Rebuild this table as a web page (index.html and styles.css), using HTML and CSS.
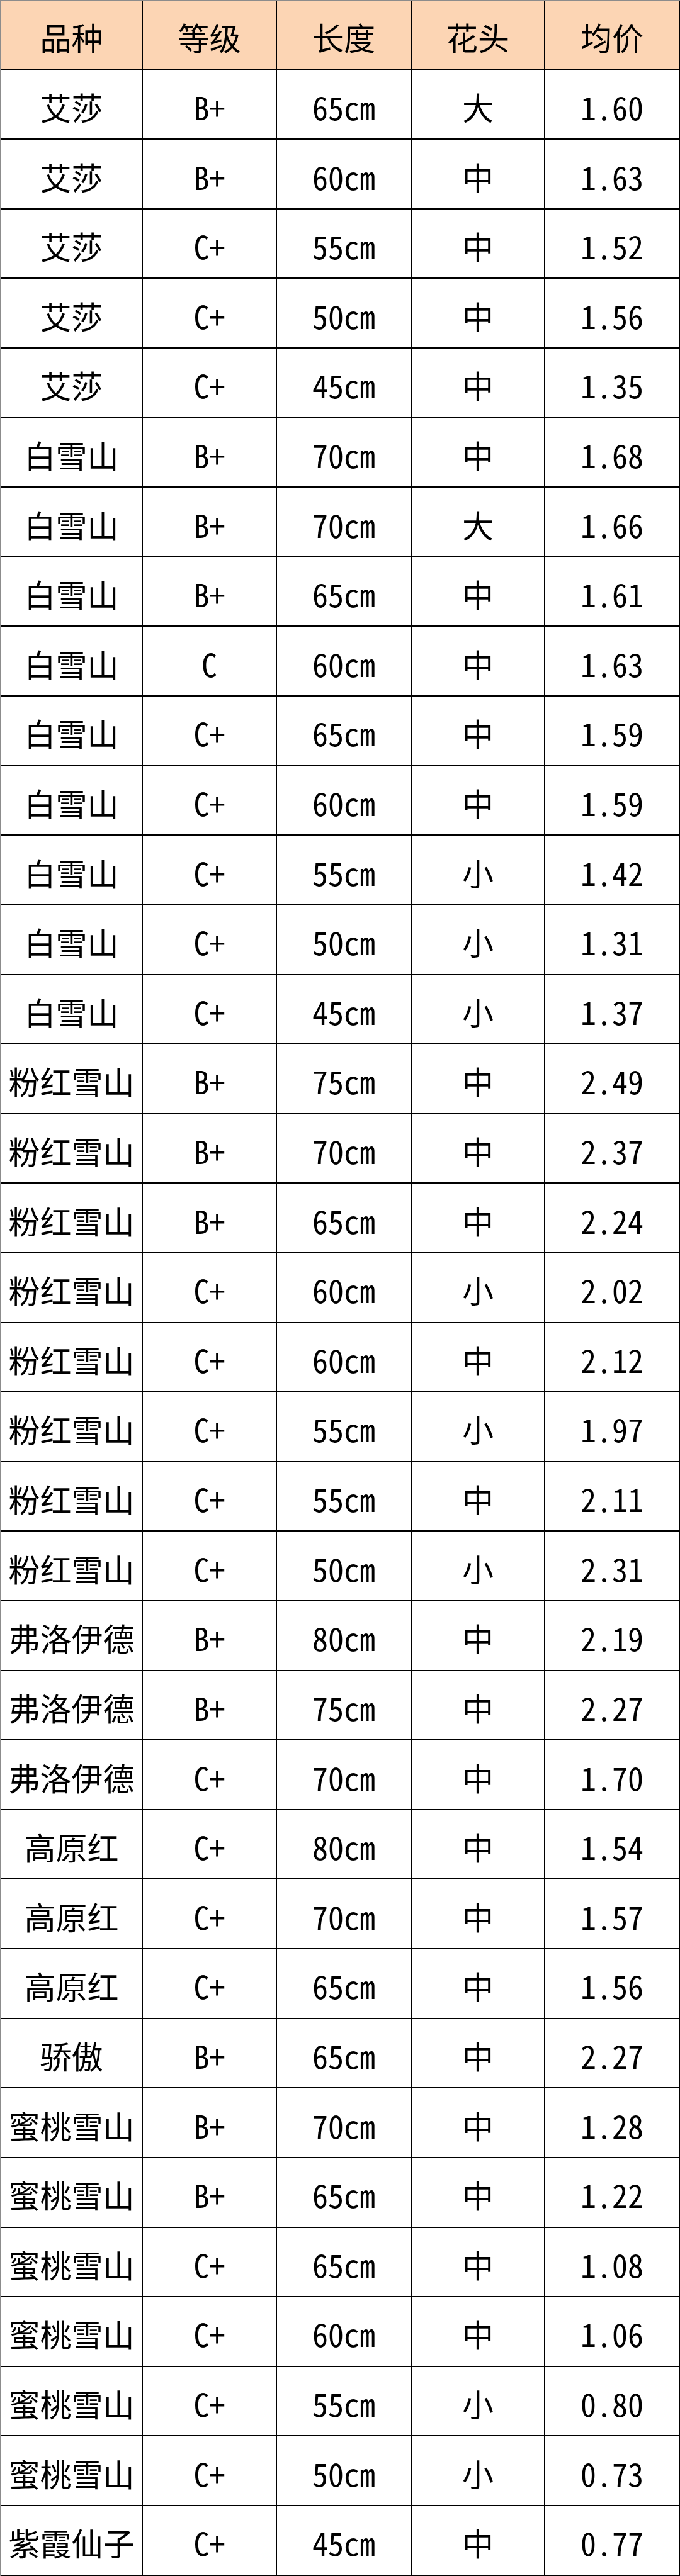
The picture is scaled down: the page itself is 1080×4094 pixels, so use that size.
FILE: index.html
```html
<!DOCTYPE html>
<html lang="zh-CN">
<head>
<meta charset="utf-8">
<title>价格表</title>
<link rel="stylesheet" href="styles.css">
</head>
<body>
<div class="sheet">
  <div class="cell head">品种</div><div class="cell head">等级</div><div class="cell head">长度</div><div class="cell head">花头</div><div class="cell head">均价</div>
  <div class="cell">艾莎</div><div class="cell">B+</div><div class="cell">65cm</div><div class="cell">大</div><div class="cell">1.60</div>
  <div class="cell">艾莎</div><div class="cell">B+</div><div class="cell">60cm</div><div class="cell">中</div><div class="cell">1.63</div>
  <div class="cell">艾莎</div><div class="cell">C+</div><div class="cell">55cm</div><div class="cell">中</div><div class="cell">1.52</div>
  <div class="cell">艾莎</div><div class="cell">C+</div><div class="cell">50cm</div><div class="cell">中</div><div class="cell">1.56</div>
  <div class="cell">艾莎</div><div class="cell">C+</div><div class="cell">45cm</div><div class="cell">中</div><div class="cell">1.35</div>
  <div class="cell">白雪山</div><div class="cell">B+</div><div class="cell">70cm</div><div class="cell">中</div><div class="cell">1.68</div>
  <div class="cell">白雪山</div><div class="cell">B+</div><div class="cell">70cm</div><div class="cell">大</div><div class="cell">1.66</div>
  <div class="cell">白雪山</div><div class="cell">B+</div><div class="cell">65cm</div><div class="cell">中</div><div class="cell">1.61</div>
  <div class="cell">白雪山</div><div class="cell">C</div><div class="cell">60cm</div><div class="cell">中</div><div class="cell">1.63</div>
  <div class="cell">白雪山</div><div class="cell">C+</div><div class="cell">65cm</div><div class="cell">中</div><div class="cell">1.59</div>
  <div class="cell">白雪山</div><div class="cell">C+</div><div class="cell">60cm</div><div class="cell">中</div><div class="cell">1.59</div>
  <div class="cell">白雪山</div><div class="cell">C+</div><div class="cell">55cm</div><div class="cell">小</div><div class="cell">1.42</div>
  <div class="cell">白雪山</div><div class="cell">C+</div><div class="cell">50cm</div><div class="cell">小</div><div class="cell">1.31</div>
  <div class="cell">白雪山</div><div class="cell">C+</div><div class="cell">45cm</div><div class="cell">小</div><div class="cell">1.37</div>
  <div class="cell">粉红雪山</div><div class="cell">B+</div><div class="cell">75cm</div><div class="cell">中</div><div class="cell">2.49</div>
  <div class="cell">粉红雪山</div><div class="cell">B+</div><div class="cell">70cm</div><div class="cell">中</div><div class="cell">2.37</div>
  <div class="cell">粉红雪山</div><div class="cell">B+</div><div class="cell">65cm</div><div class="cell">中</div><div class="cell">2.24</div>
  <div class="cell">粉红雪山</div><div class="cell">C+</div><div class="cell">60cm</div><div class="cell">小</div><div class="cell">2.02</div>
  <div class="cell">粉红雪山</div><div class="cell">C+</div><div class="cell">60cm</div><div class="cell">中</div><div class="cell">2.12</div>
  <div class="cell">粉红雪山</div><div class="cell">C+</div><div class="cell">55cm</div><div class="cell">小</div><div class="cell">1.97</div>
  <div class="cell">粉红雪山</div><div class="cell">C+</div><div class="cell">55cm</div><div class="cell">中</div><div class="cell">2.11</div>
  <div class="cell">粉红雪山</div><div class="cell">C+</div><div class="cell">50cm</div><div class="cell">小</div><div class="cell">2.31</div>
  <div class="cell">弗洛伊德</div><div class="cell">B+</div><div class="cell">80cm</div><div class="cell">中</div><div class="cell">2.19</div>
  <div class="cell">弗洛伊德</div><div class="cell">B+</div><div class="cell">75cm</div><div class="cell">中</div><div class="cell">2.27</div>
  <div class="cell">弗洛伊德</div><div class="cell">C+</div><div class="cell">70cm</div><div class="cell">中</div><div class="cell">1.70</div>
  <div class="cell">高原红</div><div class="cell">C+</div><div class="cell">80cm</div><div class="cell">中</div><div class="cell">1.54</div>
  <div class="cell">高原红</div><div class="cell">C+</div><div class="cell">70cm</div><div class="cell">中</div><div class="cell">1.57</div>
  <div class="cell">高原红</div><div class="cell">C+</div><div class="cell">65cm</div><div class="cell">中</div><div class="cell">1.56</div>
  <div class="cell">骄傲</div><div class="cell">B+</div><div class="cell">65cm</div><div class="cell">中</div><div class="cell">2.27</div>
  <div class="cell">蜜桃雪山</div><div class="cell">B+</div><div class="cell">70cm</div><div class="cell">中</div><div class="cell">1.28</div>
  <div class="cell">蜜桃雪山</div><div class="cell">B+</div><div class="cell">65cm</div><div class="cell">中</div><div class="cell">1.22</div>
  <div class="cell">蜜桃雪山</div><div class="cell">C+</div><div class="cell">65cm</div><div class="cell">中</div><div class="cell">1.08</div>
  <div class="cell">蜜桃雪山</div><div class="cell">C+</div><div class="cell">60cm</div><div class="cell">中</div><div class="cell">1.06</div>
  <div class="cell">蜜桃雪山</div><div class="cell">C+</div><div class="cell">55cm</div><div class="cell">小</div><div class="cell">0.80</div>
  <div class="cell">蜜桃雪山</div><div class="cell">C+</div><div class="cell">50cm</div><div class="cell">小</div><div class="cell">0.73</div>
  <div class="cell">紫霞仙子</div><div class="cell">C+</div><div class="cell">45cm</div><div class="cell">中</div><div class="cell">0.77</div>
</div>
</body>
</html>
```
FILE: styles.css
```css
html, body {
  margin: 0;
  padding: 0;
  background: #ffffff;
}

.sheet {
  display: grid;
  grid-template-columns: 225px 213px 214px 212px 214px;
  grid-auto-rows: 110.62px;
  width: 1078px;
  border-left: 2px solid #8c8c8c;
  border-top: 1px solid #8c8c8c;
  font-family: "Noto Sans CJK SC", "Noto Sans", sans-serif;
  font-feature-settings: "hwid" 1;
  font-size: 50px;
  color: #000000;
}

.cell {
  box-sizing: border-box;
  border-right: 2px solid #000000;
  border-bottom: 2px solid #000000;
  display: flex;
  align-items: center;
  justify-content: center;
  padding-top: 6px;
  line-height: 1;
  white-space: nowrap;
}

.head {
  background: #fcd5b4;
}
```
